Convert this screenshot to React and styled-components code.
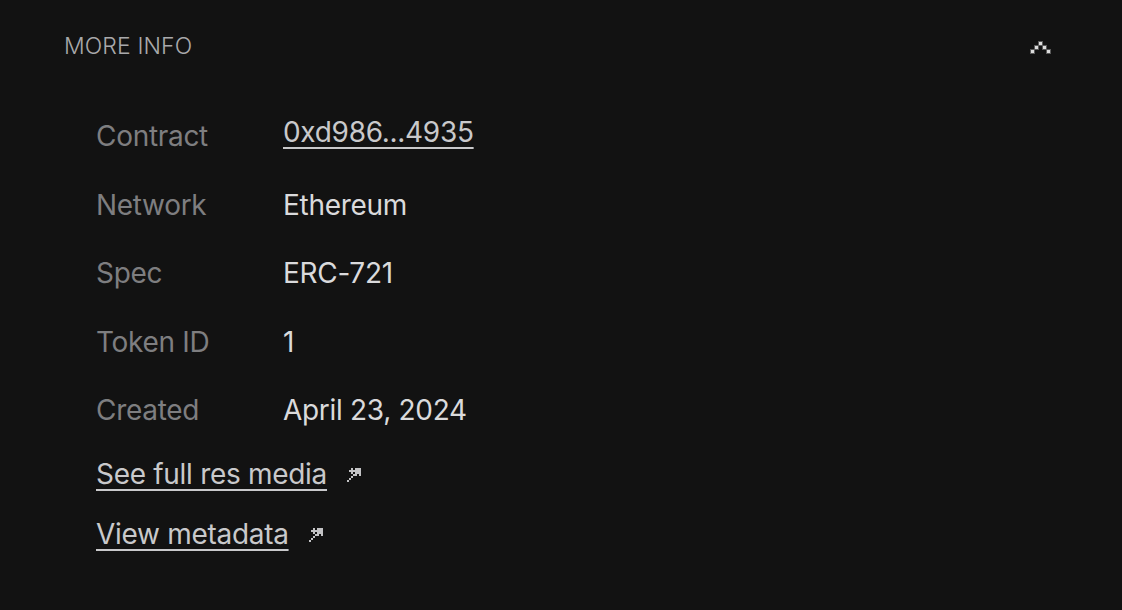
import React from "react";
import styled, { createGlobalStyle } from "styled-components";

const Global = createGlobalStyle`
  html, body { margin: 0; padding: 0; background: #121212; }
  body { font-family: Inter, "Noto Sans", sans-serif; -webkit-font-smoothing: antialiased; }
`;

const Section = styled.section`
  width: 1122px;
  height: 610px;
  box-sizing: border-box;
  padding: 26px 70px 0 64px;
  background: #121212;
`;

const Header = styled.div`
  display: flex;
  align-items: center;
  justify-content: space-between;
  height: 40px;
`;

const Title = styled.h2`
  margin: 0;
  font-family: Inter, sans-serif;
  font-weight: 300;
  font-size: 23px;
  letter-spacing: 0.1px;
  color: #a9a9ab;
`;

const Toggle = styled.button`
  display: flex;
  align-items: center;
  justify-content: center;
  padding: 0;
  border: 0;
  background: none;
  cursor: pointer;
  margin-top: 2px;
`;

const List = styled.dl`
  margin: 36px 0 0;
  padding-left: 32px;
  display: grid;
  grid-template-columns: 187px 1fr;
  grid-auto-rows: 68.5px;
  align-items: center;
  letter-spacing: -0.3px;
`;

const Label = styled.dt`
  margin: 0;
  font-size: 28px;
  color: #7e7e80;
  line-height: 68.5px;
`;

const Value = styled.dd`
  margin: 0;
  font-size: 28px;
  color: #dadadc;
  line-height: 68.5px;
  transform: translateY(${(p) => (p.$lift ? "-4px" : "0")});
`;

const Underlined = styled.a`
  color: #c9c9cb;
  text-decoration: underline;
  text-decoration-thickness: 2px;
  text-underline-offset: 5px;
`;

const Links = styled.div`
  display: flex;
  flex-direction: column;
  gap: 24px;
  padding-left: 32px;
  margin-top: 11px;
`;

const LinkRow = styled.a`
  display: inline-flex;
  align-items: center;
  gap: 20px;
  font-size: 28px;
  line-height: 36px;
  letter-spacing: -0.3px;
  color: #c9c9cb;
  text-decoration: none;
  width: max-content;
  span {
    text-decoration: underline;
    text-decoration-thickness: 2px;
    text-underline-offset: 5px;
  }
`;

const px = (rows, size, color) => {
  const rects = [];
  rows.forEach((r, y) =>
    r.split("").forEach((c, x) => {
      if (c === "X") rects.push(<rect key={`${x}-${y}`} x={x * size} y={y * size} width={size} height={size} fill={color} />);
    })
  );
  return rects;
};

const Arrow = () => (
  <svg width="14" height="14" viewBox="0 0 14 14" style={{ marginTop: 2 }}>
    {px(
      [
        "..X.XXX",
        ".XXXXXX",
        "..X.XXX",
        "...XX.X",
        "..X....",
        ".X.....",
        "X......",
      ],
      2,
      "#c3c3c5"
    )}
  </svg>
);

const Chevron = () => (
  <svg width="22" height="13" viewBox="0 0 22 13">
    {[
      [8.5, 0.5],
      [4.5, 4.5],
      [12.5, 4.5],
      [0.5, 8.5],
      [16.5, 8.5],
    ].map(([x, y], i) => (
      <rect key={i} x={x} y={y} width="4" height="4" fill="#dcdcdc" stroke="#5a5a5a" strokeWidth="1" />
    ))}
  </svg>
);

const rows = [
  { label: "Contract", value: "0xd986...4935", link: true },
  { label: "Network", value: "Ethereum" },
  { label: "Spec", value: "ERC-721" },
  { label: "Token ID", value: "1" },
  { label: "Created", value: "April 23, 2024" },
];

export default function App() {
  return (
    <>
      <Global />
      <Section>
        <Header>
          <Title>MORE INFO</Title>
          <Toggle aria-label="Collapse">
            <Chevron />
          </Toggle>
        </Header>
        <List>
          {rows.map((r) => (
            <React.Fragment key={r.label}>
              <Label>{r.label}</Label>
              <Value $lift={r.link}>{r.link ? <Underlined href="#">{r.value}</Underlined> : r.value}</Value>
            </React.Fragment>
          ))}
        </List>
        <Links>
          <LinkRow href="#">
            <span>See full res media</span>
            <Arrow />
          </LinkRow>
          <LinkRow href="#">
            <span>View metadata</span>
            <Arrow />
          </LinkRow>
        </Links>
      </Section>
    </>
  );
}
